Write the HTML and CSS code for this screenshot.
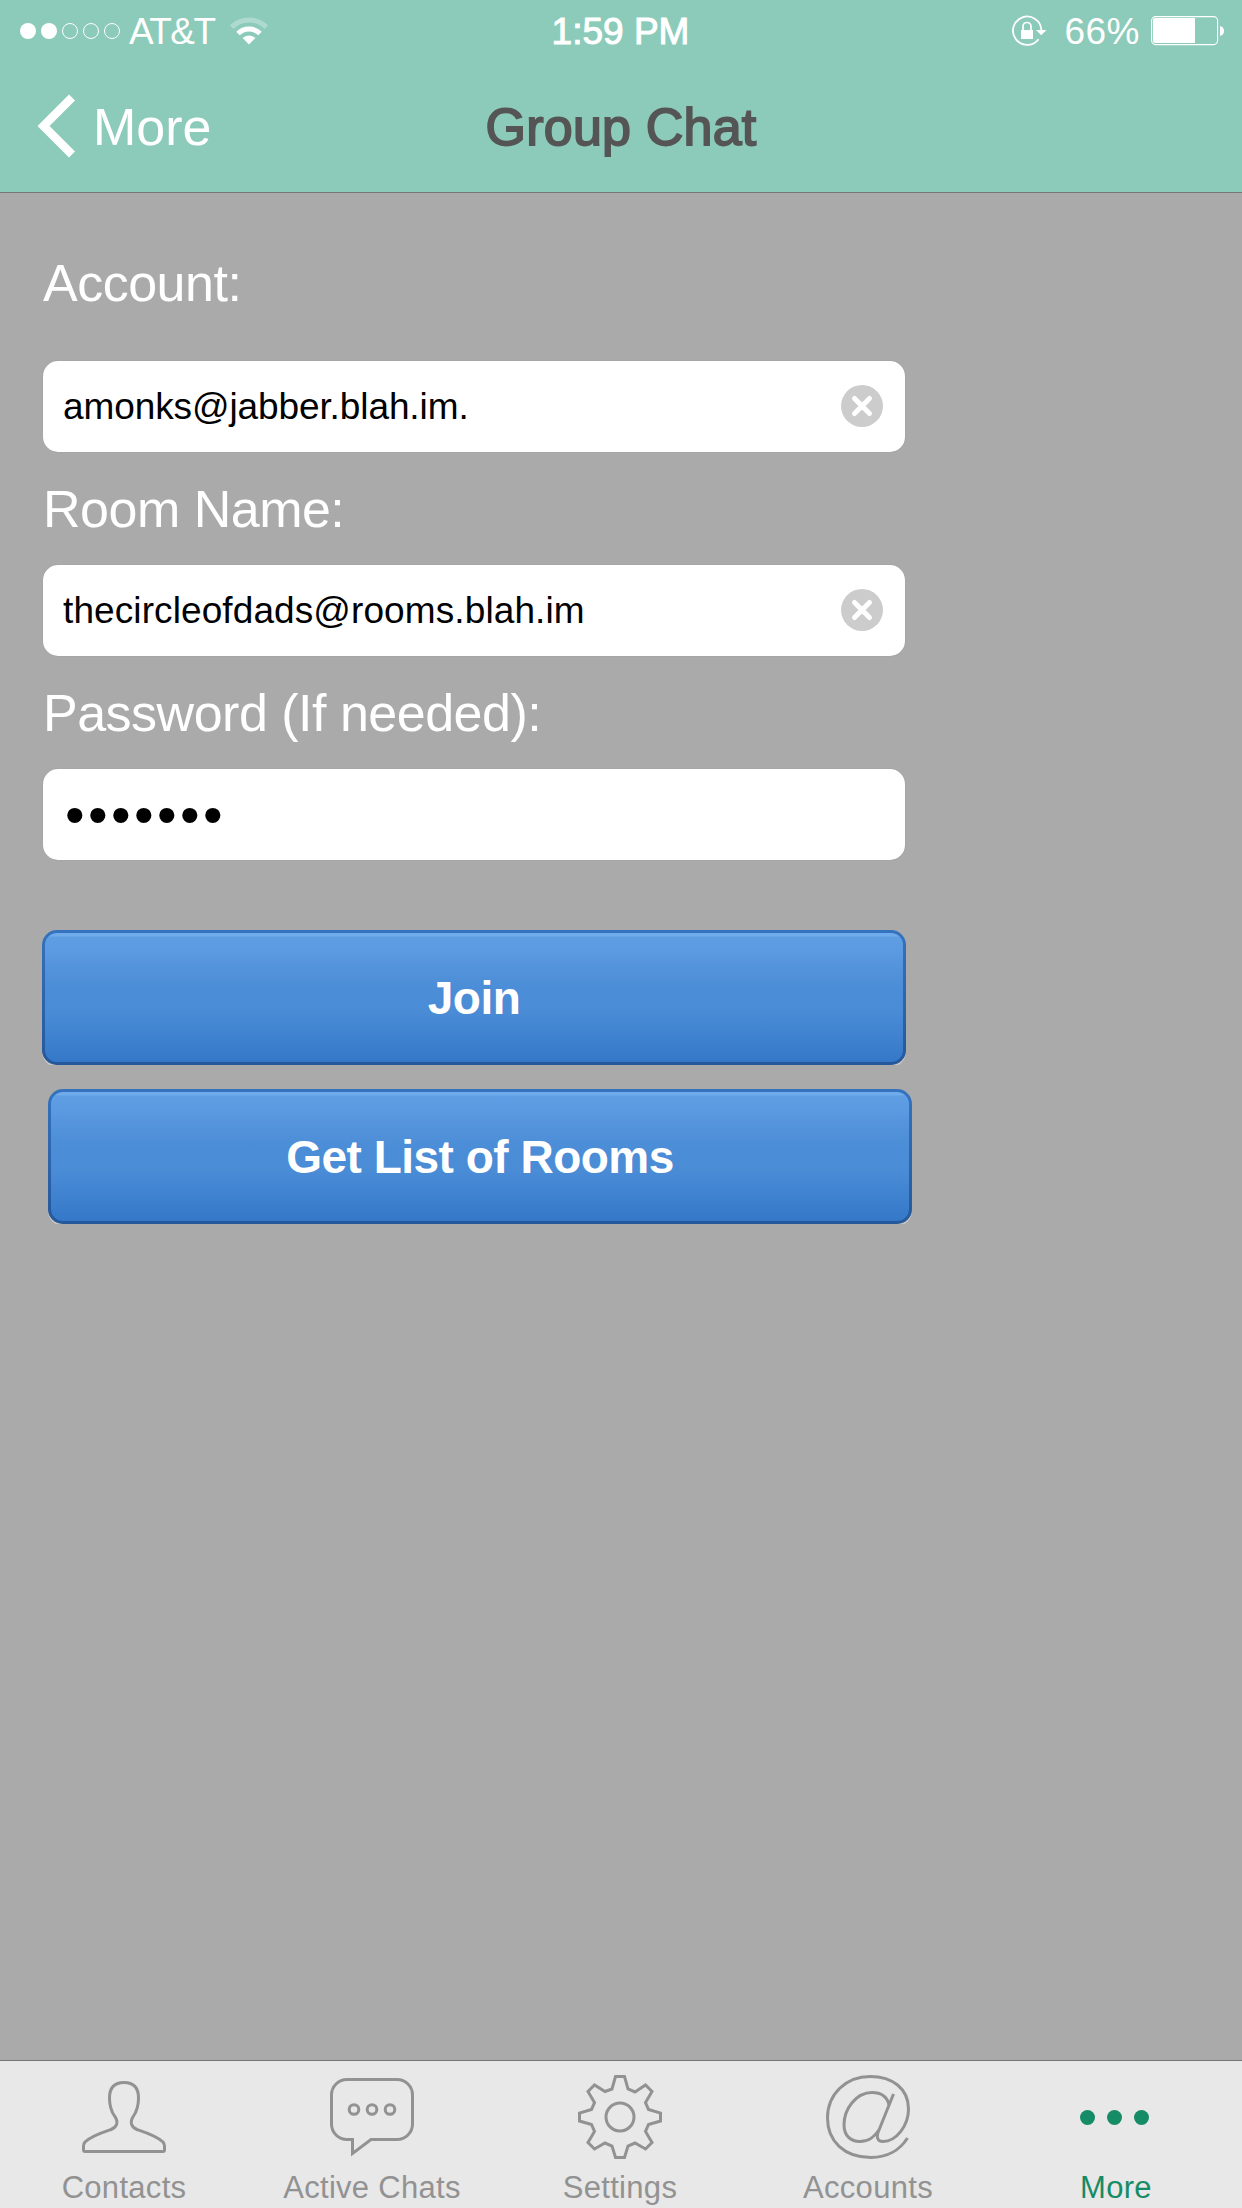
FILE: index.html
```html
<!DOCTYPE html>
<html lang="en">
<head>
  <meta charset="UTF-8" />
  <meta name="viewport" content="width=device-width, initial-scale=1.0" />
  <title>Group Chat</title>
  <link rel="stylesheet" href="styles.css">
</head>
<body>
  <header class="header">
    <div class="status-bar">
      <div class="status-left">
        <svg class="signal" width="100" height="20" viewBox="0 0 100 20">
          <g fill="#fff">
            <circle cx="8" cy="10" r="8" />
            <circle cx="29" cy="10" r="8" />
          </g>
          <g fill="none" stroke="#fff">
            <circle cx="50" cy="10" r="7.5" />
            <circle cx="71" cy="10" r="7.5" />
            <circle cx="92" cy="10" r="7.5" />
          </g>
        </svg>
        <span class="carrier">AT&amp;T</span>
        <svg class="wifi" width="38" height="28" viewBox="0 0 38 28">
          <path d="M1.7 10.2A24.5 24.5 0 0 1 36.3 10.2" fill="none" stroke="#fff" stroke-width="5" opacity=".3" />
          <path d="M8 16.6A15.5 15.5 0 0 1 30 16.6" fill="none" stroke="#fff" stroke-width="5" />
          <path d="M19 27.5L12.6 21.1A9.1 9.1 0 0 1 25.4 21.1Z" fill="#fff" />
        </svg>
      </div>
      <div class="time">1:59 PM</div>
      <div class="status-right">
        <svg width="36" height="32" viewBox="0 0 36 32">
          <path d="M29.4 15A14.2 14.2 0 1 0 26.6 24.2" fill="none" stroke="#fff" stroke-width="1.8" />
          <path d="M24 15H34.5L29.2 20.2Z" fill="#fff" />
          <rect x="9" y="15" width="12" height="9" fill="#fff" />
          <path d="M11 16V11.5A4 4 0 0 1 19 11.5V16" fill="none" stroke="#fff" stroke-width="1.7" />
        </svg>
        <span class="percent">66%</span>
        <svg width="75" height="30" viewBox="0 0 75 30">
          <rect x=".6" y=".6" width="66" height="28" rx="4" fill="none" stroke="#fff" stroke-width="1.1" />
          <path d="M4 2H44V27H4Q2 27 2 25V4Q2 2 4 2Z" fill="#fff" />
          <path d="M69 10Q73 11 73 15T69 20Z" fill="#fff" />
        </svg>
      </div>
    </div>
    <nav class="nav-bar">
      <a class="back">
        <svg width="40" height="66" viewBox="0 0 40 66">
          <path d="M36 4.5L7.5 33L36 61.5" fill="none" stroke="#fff" stroke-width="8.5" />
        </svg>
        <span>More</span>
      </a>
      <h1>Group Chat</h1>
    </nav>
  </header>

  <form class="join-form">
    <label class="first" for="account">Account:</label>
    <div class="field">
      <input type="text" id="account" value="amonks@jabber.blah.im." />
      <svg width="42" height="42" viewBox="0 0 42 42">
        <circle cx="21" cy="21" r="21" fill="#ccc" />
        <path d="M13.5 13.5L28.5 28.5M28.5 13.5L13.5 28.5" stroke="#fff" stroke-width="5" stroke-linecap="round" />
      </svg>
    </div>

    <label for="room">Room Name:</label>
    <div class="field">
      <input type="text" id="room" value="thecircleofdads@rooms.blah.im" />
      <svg width="42" height="42" viewBox="0 0 42 42">
        <circle cx="21" cy="21" r="21" fill="#ccc" />
        <path d="M13.5 13.5L28.5 28.5M28.5 13.5L13.5 28.5" stroke="#fff" stroke-width="5" stroke-linecap="round" />
      </svg>
    </div>

    <label for="password">Password (If needed):</label>
    <div class="field">
      <span class="dots" id="password">•••••••</span>
    </div>

    <button type="button" class="join">Join</button>
    <button type="button" class="list">Get List of Rooms</button>
  </form>

  <footer class="tab-bar">
    <a class="tab">
      <svg width="84" height="84" viewBox="0 0 84 84">
        <path d="M42 7.5C32 7.5 27.5 13 27.5 23C27.5 32 29 36 32.500 41C37 47 35 52 29 54.500C20 57.500 9 61 3 67Q1.500 69 1.500 71V75Q1.500 76.500 3 76.500H81Q82.500 76.500 82.500 75V71Q82.500 69 81 67C75 61 64 57.500 55 54.500C49 52 47.500 47 51.500 41C55 36 56.500 32 56.500 23C56.500 13 52 7.500 42 7.500Z" />
      </svg>
      <span>Contacts</span>
    </a>
    <a class="tab">
      <svg width="84" height="84" viewBox="0 0 84 84">
        <path d="M17 4.500H67A15.500 15.500 0 0 1 82.500 20V49A15.500 15.500 0 0 1 67 64.500H41L22.500 78.500V64.500H17A15.500 15.500 0 0 1 1.500 49V20A15.500 15.500 0 0 1 17 4.500Z" />
        <circle cx="24" cy="34.500" r="4.800" />
        <circle cx="42" cy="34.500" r="4.800" />
        <circle cx="60" cy="34.500" r="4.800" />
      </svg>
      <span>Active Chats</span>
    </a>
    <a class="tab">
      <svg width="84" height="84" viewBox="0 0 84 84">
        <path d="M37.500 1.500H46.500L50 14L57 17L67.500 10L74 16.500L67.500 27.500L70.500 34.500L82.500 38V46L70.500 49.500L67.500 56.500L74 67.500L67.500 74L57 68L50 71L46.500 82.500H37.500L34 71L27 68L16.500 74L10 67.500L16.500 56.500L13.500 49.500L1.500 46V38L13.500 34.500L16.500 27.500L10 16.500L16.500 10L27 16.500L34 14Z" />
        <circle cx="42" cy="42" r="14" />
      </svg>
      <span>Settings</span>
    </a>
    <a class="tab">
      <svg width="84" height="84" viewBox="0 0 84 84">
        <path d="M81.500 63C74 75 61 82.500 45 82.500C18 82.500 1.500 66 1.500 43C1.500 19 20 1.500 44 1.500C67 1.500 82.500 14 82.500 34C82.500 51 70 66.500 57 66.500C51 66.500 50 62 53 55L67.500 19" />
        <path d="M63 30C61 21 54 17.500 46 17.500C30 17.500 18 34 18 50C18 61 25 66.500 34 66.500C43 66.500 48 62 53 55" />
      </svg>
      <span>Accounts</span>
    </a>
    <a class="tab active">
      <svg width="84" height="84" viewBox="0 0 84 84">
        <circle cx="13.500" cy="42.500" r="7.500" />
        <circle cx="40.500" cy="42.500" r="7.500" />
        <circle cx="67.500" cy="42.500" r="7.500" />
      </svg>
      <span>More</span>
    </a>
  </footer>
</body>
</html>
```
FILE: styles.css
```css
* {
  box-sizing: border-box;
}
body {
  margin: 0;
  width: 1242px;
  height: 2208px;
  display: flex;
  flex-direction: column;
  overflow: hidden;
  background: #aaa;
  font-family: "Liberation Sans", Arial, sans-serif;
}
svg {
  display: block;
  flex: none;
}

/* header */
.header {
  height: 193px;
  background: #8ccbb9;
  border-bottom: 1px solid #777;
  color: #fff;
}
.status-bar {
  display: grid;
  grid-template-columns: 1fr auto 1fr;
  align-items: center;
  height: 60px;
  padding: 0 16px 0 20px;
  font-size: 37px;
  line-height: 60px;
}
.status-left, .status-right {
  display: flex;
  align-items: center;
}
.status-right {
  justify-content: flex-end;
}
.carrier {
  margin-left: 9px;
  padding-top: 2px;
  letter-spacing: -1.6px;
}
.wifi {
  margin-left: 16px;
}
.time {
  padding: 2px 5px 0 0;
  -webkit-text-stroke: 1px #fff;
}
.percent {
  margin: 0 11px 0 16px;
  padding-top: 2px;
  letter-spacing: 0.5px;
}
.nav-bar {
  display: grid;
  grid-template-columns: 1fr auto 1fr;
  align-items: center;
  height: 132px;
  padding: 0 36px;
  font-size: 52px;
}
.back {
  display: flex;
  align-items: center;
}
.back span {
  margin-left: 17px;
  padding-top: 2px;
}
.nav-bar h1 {
  margin: 0;
  padding-top: 2px;
  font-size: 52px;
  font-weight: normal;
  letter-spacing: 0.2px;
  color: #555;
  -webkit-text-stroke: 1.8px #555;
}

/* form */
.join-form {
  flex: 1;
  display: flex;
  flex-direction: column;
  align-items: flex-start;
  padding: 60px 42px 0;
}
label {
  margin: 27px 0 26px 1px;
  font-size: 52px;
  line-height: 60px;
  letter-spacing: -0.5px;
  color: #fff;
}
label.first {
  margin: 0 0 48px 1px;
}
.field {
  display: flex;
  align-items: center;
  width: 862px;
  height: 91px;
  margin-left: 1px;
  padding: 0 22px 0 20px;
  background: #fff;
  border-radius: 15px;
  box-shadow: 0 0 1px #888;
}
.field input {
  flex: 1;
  padding: 0;
  border: none;
  outline: none;
  background: none;
  font-family: inherit;
  font-size: 37px;
  letter-spacing: -0.1px;
  color: #000;
}
.field #room {
  letter-spacing: 0.1px;
}
.field svg {
  margin-bottom: 1px;
}
.dots {
  margin: 0 0 1px 2px;
  font-size: 56px;
  letter-spacing: 3.4px;
}
button {
  width: 864px;
  height: 135px;
  border: 3px solid transparent;
  border-radius: 15px;
  background:
    linear-gradient(#70aceb 3px, #609ee4 4px, #5b99e0 15%, #4b8dd7 42%, #4a8cd6 60%, #3578c8) padding-box,
    linear-gradient(#3573bf, #25589a) border-box;
  /* light edge that only shows under the bottom corners */
  box-shadow: 0 2px 0 #c4c4c4;
  clip-path: inset(0);
  font-family: inherit;
  font-size: 46px;
  font-weight: bold;
  letter-spacing: -0.5px;
  color: #fff;
}
.join {
  margin-top: 70px;
}
.list {
  margin: 24px 0 0 6px;
}

/* tab bar */
.tab-bar {
  display: flex;
  height: 148px;
  background: #e8e8e8;
  border-top: 1px solid #757575;
}
.tab {
  flex: 0 0 248px;
  display: flex;
  flex-direction: column;
  align-items: center;
  padding-top: 14px;
  font-size: 31px;
  line-height: 36px;
  letter-spacing: 0.3px;
  color: #929292;
}
.tab svg {
  margin-bottom: 11px;
  fill: none;
  stroke: #929292;
  stroke-width: 3;
}
.tab.active {
  color: #168c66;
}
.tab.active svg {
  fill: #168c66;
  stroke: none;
}
```
